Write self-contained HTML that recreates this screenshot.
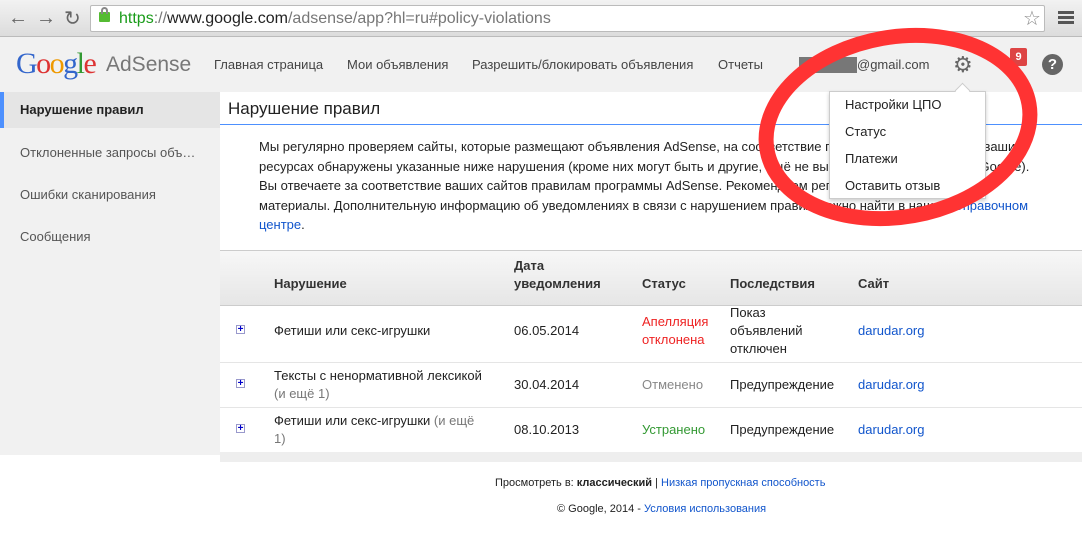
<!DOCTYPE html>
<html><head><meta charset="utf-8"><style>
*{margin:0;padding:0;box-sizing:border-box}
body{width:1082px;height:546px;overflow:hidden;font-family:"Liberation Sans",Arial,sans-serif;background:#fff;position:relative;font-size:13px;color:#222}
.abs{position:absolute}
#chrome{left:0;top:0;width:1082px;height:37px;background:linear-gradient(#f2f2f2,#dcdcdc);border-bottom:1px solid #bbb}
#url{left:90px;top:5px;width:955px;height:27px;background:#fff;border:1px solid #bbb;border-radius:2px;font-size:16px;line-height:25px;padding-left:28px;color:#777}
#hdr{left:0;top:37px;width:1082px;height:55px;background:#f1f1f1}
.nav{top:57px;font-size:13px;color:#444}
#side{left:0;top:92px;width:220px;height:363px;background:#f1f1f1}
.si{left:20px;font-size:13px;color:#555}
#tbh{left:220px;top:250px;width:862px;height:56px;background:linear-gradient(#f7f7f7,#e6e6e6);border-top:1px solid #ccc;border-bottom:1px solid #ccc}
.th{font-weight:bold;color:#333;font-size:13px;line-height:18px}
.td{font-size:13px;line-height:18px;color:#222}
.plus{width:9px;height:9px;border:1px solid #99c;background:#fff;color:#00c;font-size:10px;line-height:7px;text-align:center;font-weight:bold}
a,.lnk{color:#15c}
.dd{font-size:13px;color:#222;left:845px}
</style></head><body>
<div id="chrome" class="abs"></div>
<div class="abs" style="left:8px;top:7px;font-size:20px;color:#666">&#8592;</div>
<div class="abs" style="left:36px;top:7px;font-size:20px;color:#666">&#8594;</div>
<div class="abs" style="left:64px;top:6px;font-size:20px;color:#666">&#8635;</div>
<div id="url" class="abs"><span style="color:#1a9c1a">https</span>://<span style="color:#222">www.google.com</span>/adsense/app?hl=ru#policy-violations</div>
<div class="abs" style="left:99px;top:12px;width:11px;height:10px;background:#5b3;border-radius:1px"></div>
<div class="abs" style="left:101px;top:7px;width:7px;height:7px;border:2px solid #888;border-bottom:none;border-radius:4px 4px 0 0"></div>
<div class="abs" style="left:1023px;top:6px;font-size:20px;color:#888">&#9734;</div>
<div class="abs" style="left:1058px;top:11px;width:16px;height:3px;background:#555;box-shadow:0 5px 0 #555,0 10px 0 #555"></div>
<div id="hdr" class="abs"></div>
<div class="abs" style="left:16px;top:47px;font-family:'Liberation Serif',serif;font-size:30px;letter-spacing:-1.5px"><span style="color:#36c">G</span><span style="color:#d33">o</span><span style="color:#e90">o</span><span style="color:#36c">g</span><span style="color:#393">l</span><span style="color:#d33">e</span></div>
<div class="abs" style="left:106px;top:53px;font-size:21px;color:#777">AdSense</div>
<div class="abs nav" style="left:214px">Главная страница</div>
<div class="abs nav" style="left:347px">Мои объявления</div>
<div class="abs nav" style="left:472px">Разрешить/блокировать объявления</div>
<div class="abs nav" style="left:718px">Отчеты</div>
<div class="abs" style="left:799px;top:57px;width:58px;height:16px;background:#777"></div>
<div class="abs nav" style="left:857px">@gmail.com</div>
<div class="abs" style="left:953px;top:52px;font-size:22px;color:#666">&#9881;</div>
<div class="abs" style="left:998px;top:58px;width:10px;height:12px;background:#777;clip-path:polygon(0 30%,100% 0,100% 100%,0 70%)"></div>
<div class="abs" style="left:1010px;top:48px;width:17px;height:18px;background:#d44;border-radius:2px;color:#fff;font-size:11px;font-weight:bold;text-align:center;line-height:18px">9</div>
<div class="abs" style="left:1042px;top:54px;width:21px;height:21px;border-radius:50%;background:#666;color:#fff;font-weight:bold;font-size:15px;text-align:center;line-height:21px">?</div>
<div id="side" class="abs"></div>
<div class="abs" style="left:0;top:92px;width:220px;height:36px;background:#e5e5e5;border-left:4px solid #4d90fe"></div>
<div class="abs si" style="top:102px;color:#222;font-weight:bold">Нарушение правил</div>
<div class="abs si" style="top:145px">Отклоненные запросы объ…</div>
<div class="abs si" style="top:187px">Ошибки сканирования</div>
<div class="abs si" style="top:229px">Сообщения</div>
<div class="abs" style="left:228px;top:99px;font-size:17px;color:#222">Нарушение правил</div>
<div class="abs" style="left:220px;top:124px;width:862px;height:1px;background:#4d90fe"></div>
<div class="abs" style="left:259px;top:137px;width:785px;font-size:13px;line-height:19.5px;color:#222">Мы регулярно проверяем сайты, которые размещают объявления AdSense, на соответствие правилам программы. На ваших ресурсах обнаружены указанные ниже нарушения (кроме них могут быть и другие, ещё не выявленные сотрудниками Google). Вы отвечаете за соответствие ваших сайтов правилам программы AdSense. Рекомендуем регулярно проверять свои материалы. Дополнительную информацию об уведомлениях в связи с нарушением правил можно найти в нашем <span class="lnk">Справочном центре</span>.</div>
<div id="tbh" class="abs"></div>
<div class="abs th" style="left:274px;top:275px">Нарушение</div>
<div class="abs th" style="left:514px;top:257px">Дата<br>уведомления</div>
<div class="abs th" style="left:642px;top:275px">Статус</div>
<div class="abs th" style="left:730px;top:275px">Последствия</div>
<div class="abs th" style="left:858px;top:275px">Сайт</div>
<div class="abs" style="left:220px;top:362px;width:862px;height:1px;background:#e5e5e5"></div>
<div class="abs" style="left:220px;top:407px;width:862px;height:1px;background:#e5e5e5"></div>
<div class="abs" style="left:220px;top:452px;width:862px;height:10px;background:#eee"></div>
<div class="abs plus" style="left:236px;top:325px">+</div>
<div class="abs plus" style="left:236px;top:379px">+</div>
<div class="abs plus" style="left:236px;top:424px">+</div>
<div class="abs td" style="left:274px;top:322px">Фетиши или секс-игрушки</div>
<div class="abs td" style="left:514px;top:322px">06.05.2014</div>
<div class="abs td" style="left:642px;top:313px;color:#e22">Апелляция<br>отклонена</div>
<div class="abs td" style="left:730px;top:304px">Показ<br>объявлений<br>отключен</div>
<div class="abs td lnk" style="left:858px;top:322px">darudar.org</div>
<div class="abs td" style="left:274px;top:367px">Тексты с ненормативной лексикой<br><span style="color:#777">(и ещё 1)</span></div>
<div class="abs td" style="left:514px;top:376px">30.04.2014</div>
<div class="abs td" style="left:642px;top:376px;color:#888">Отменено</div>
<div class="abs td" style="left:730px;top:376px">Предупреждение</div>
<div class="abs td lnk" style="left:858px;top:376px">darudar.org</div>
<div class="abs td" style="left:274px;top:412px">Фетиши или секс-игрушки <span style="color:#777">(и ещё<br>1)</span></div>
<div class="abs td" style="left:514px;top:421px">08.10.2013</div>
<div class="abs td" style="left:642px;top:421px;color:#393">Устранено</div>
<div class="abs td" style="left:730px;top:421px">Предупреждение</div>
<div class="abs td lnk" style="left:858px;top:421px">darudar.org</div>
<div class="abs" style="left:495px;top:477px;font-size:11px">Просмотреть в: <b>классический</b> | <span class="lnk">Низкая пропускная способность</span></div>
<div class="abs" style="left:557px;top:503px;font-size:11px">© Google, 2014 - <span class="lnk">Условия использования</span></div>
<div class="abs" style="left:829px;top:91px;width:157px;height:108px;background:#fff;border:1px solid #ccc;box-shadow:0 2px 4px rgba(0,0,0,.2)"></div>
<div class="abs" style="left:957px;top:85px;width:11px;height:11px;background:#fff;border-left:1px solid #ccc;border-top:1px solid #ccc;transform:rotate(45deg)"></div>
<div class="abs dd" style="top:97px">Настройки ЦПО</div>
<div class="abs dd" style="top:124px">Статус</div>
<div class="abs dd" style="top:151px">Платежи</div>
<div class="abs dd" style="top:178px">Оставить отзыв</div>
<svg class="abs" style="left:0;top:0" width="1082" height="546"><ellipse cx="898" cy="127" rx="133" ry="90" fill="none" stroke="#f33" stroke-width="15" transform="rotate(-10 898 127)"/></svg>
</body></html>
